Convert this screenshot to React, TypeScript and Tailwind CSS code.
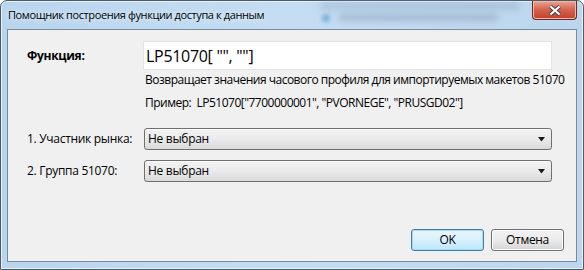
import React from "react";

const ui = "font-['Open_Sans','Noto_Sans',sans-serif]";

function Combo({ value }: { value: string }) {
  return (
    <div className="flex h-[22px] w-[408px] items-center justify-between rounded-[3px] border border-[#707070] bg-gradient-to-b from-[#f2f2f2] via-[#ebebeb] to-[#d9d9d9] pl-[3px] pr-[5px] shadow-[inset_0_1px_0_#ffffff]">
      <span className="text-[12px] tracking-[-0.3px] text-black">{value}</span>
      <svg width="8" height="5" viewBox="0 0 8 5">
        <path d="M0 0 H7 L3.5 4.5 Z" fill="#1a1a1a" />
      </svg>
    </div>
  );
}

function Button({ label, focused }: { label: string; focused?: boolean }) {
  return (
    <button
      type="button"
      className={
        "flex h-[22px] w-[73px] items-center justify-center rounded-[3px] border text-[12px] tracking-[-0.3px] text-black " +
        (focused
          ? "border-[#3c7fb1] bg-gradient-to-b from-[#eaf6fd] via-[#d9f0fc] to-[#bee6fd] shadow-[inset_0_0_0_1px_#a7d9f5]"
          : "border-[#707070] bg-gradient-to-b from-[#f2f2f2] via-[#ebebeb] to-[#d5d5d5] shadow-[inset_0_0_0_1px_#fcfcfc]")
      }
    >
      {label}
    </button>
  );
}

export default function App() {
  return (
    <div className={"relative h-[270px] w-[584px] overflow-hidden " + ui}>
      <div className="flex h-full w-full flex-col rounded-t-[7px] border border-[#4d5a68] bg-gradient-to-r from-[#b9d5ee] via-[#c4ddf3] to-[#bcd6ee] shadow-[inset_0_0_0_1px_#e6f1fb]">
        {/* blurred window behind the glass */}
        <div className="pointer-events-none absolute left-[320px] top-[2px] h-[8px] w-[200px] rounded bg-[#8aa3bb]/40 blur-[3px]" />
        <div className="pointer-events-none absolute left-[322px] top-[14px] h-[8px] w-[8px] rounded-full bg-[#4f8fc8]/60 blur-[2px]" />
        <div className="pointer-events-none absolute left-[338px] top-[14px] h-[7px] w-[160px] rounded bg-[#7f95ab]/45 blur-[3px]" />

        <div className="relative flex h-[28px] shrink-0 items-center justify-between pl-[7px]">
          <span className="pt-[1px] text-[11px] tracking-[-0.4px] text-black [text-shadow:0_0_6px_#ffffff]">
            Помощник построения функции доступа к данным
          </span>
          <div className="mr-[6px] flex h-[19px] w-[45px] self-start items-center justify-center rounded-b-[4px] border border-t-0 border-[#6b2a22] bg-gradient-to-b from-[#e8a595] via-[#d4604c] to-[#c1412d] shadow-[inset_0_0_0_1px_#f0b8aa]">
            <svg width="14" height="11" viewBox="0 0 14 11">
              <path
                d="M2.5 1.5 L11.5 9.5 M11.5 1.5 L2.5 9.5"
                stroke="#3a3a3a"
                strokeWidth="4"
                fill="none"
              />
              <path
                d="M2.5 1.5 L11.5 9.5 M11.5 1.5 L2.5 9.5"
                stroke="#ffffff"
                strokeWidth="2.2"
                fill="none"
              />
            </svg>
          </div>
        </div>

        <div className="mx-[6px] mb-[7px] flex flex-1 flex-col border border-[#7c8b9b] bg-[#f0f0f0]">
          <div className="mt-[11px] flex items-center">
            <span className="w-[135px] pl-[19px] text-[12px] font-bold tracking-[-0.3px] text-black">
              Функция:
            </span>
            <div className="flex h-[29px] w-[409px] items-center border border-[#e3e3e3] bg-white pl-[2px]">
              <span className="text-[16px] tracking-[-0.3px] text-black">LP51070[ "", ""]</span>
            </div>
          </div>
          <div className="ml-[137px] mt-[1px] text-[12px] leading-[18px] tracking-[-0.5px] text-black">
            Возвращает значения часового профиля для импортируемых макетов 51070
          </div>
          <div className="ml-[137px] mt-[5px] text-[12px] leading-[18px] tracking-[-0.5px] text-black">
            Пример:&nbsp; LP51070["7700000001", "PVORNEGE", "PRUSGD02"]
          </div>

          <div className="mt-[16px] flex items-center">
            <span className="w-[136px] pl-[19px] text-[12px] tracking-[-0.3px] text-black">
              1. Участник рынка:
            </span>
            <Combo value="Не выбран" />
          </div>
          <div className="mt-[10px] flex items-center">
            <span className="w-[136px] pl-[19px] text-[12px] tracking-[-0.3px] text-black">
              2. Группа 51070:
            </span>
            <Combo value="Не выбран" />
          </div>

          <div className="mt-auto mb-[10px] mr-[12px] flex justify-end gap-[7px]">
            <Button label="OK" focused />
            <Button label="Отмена" />
          </div>
        </div>
      </div>
    </div>
  );
}
